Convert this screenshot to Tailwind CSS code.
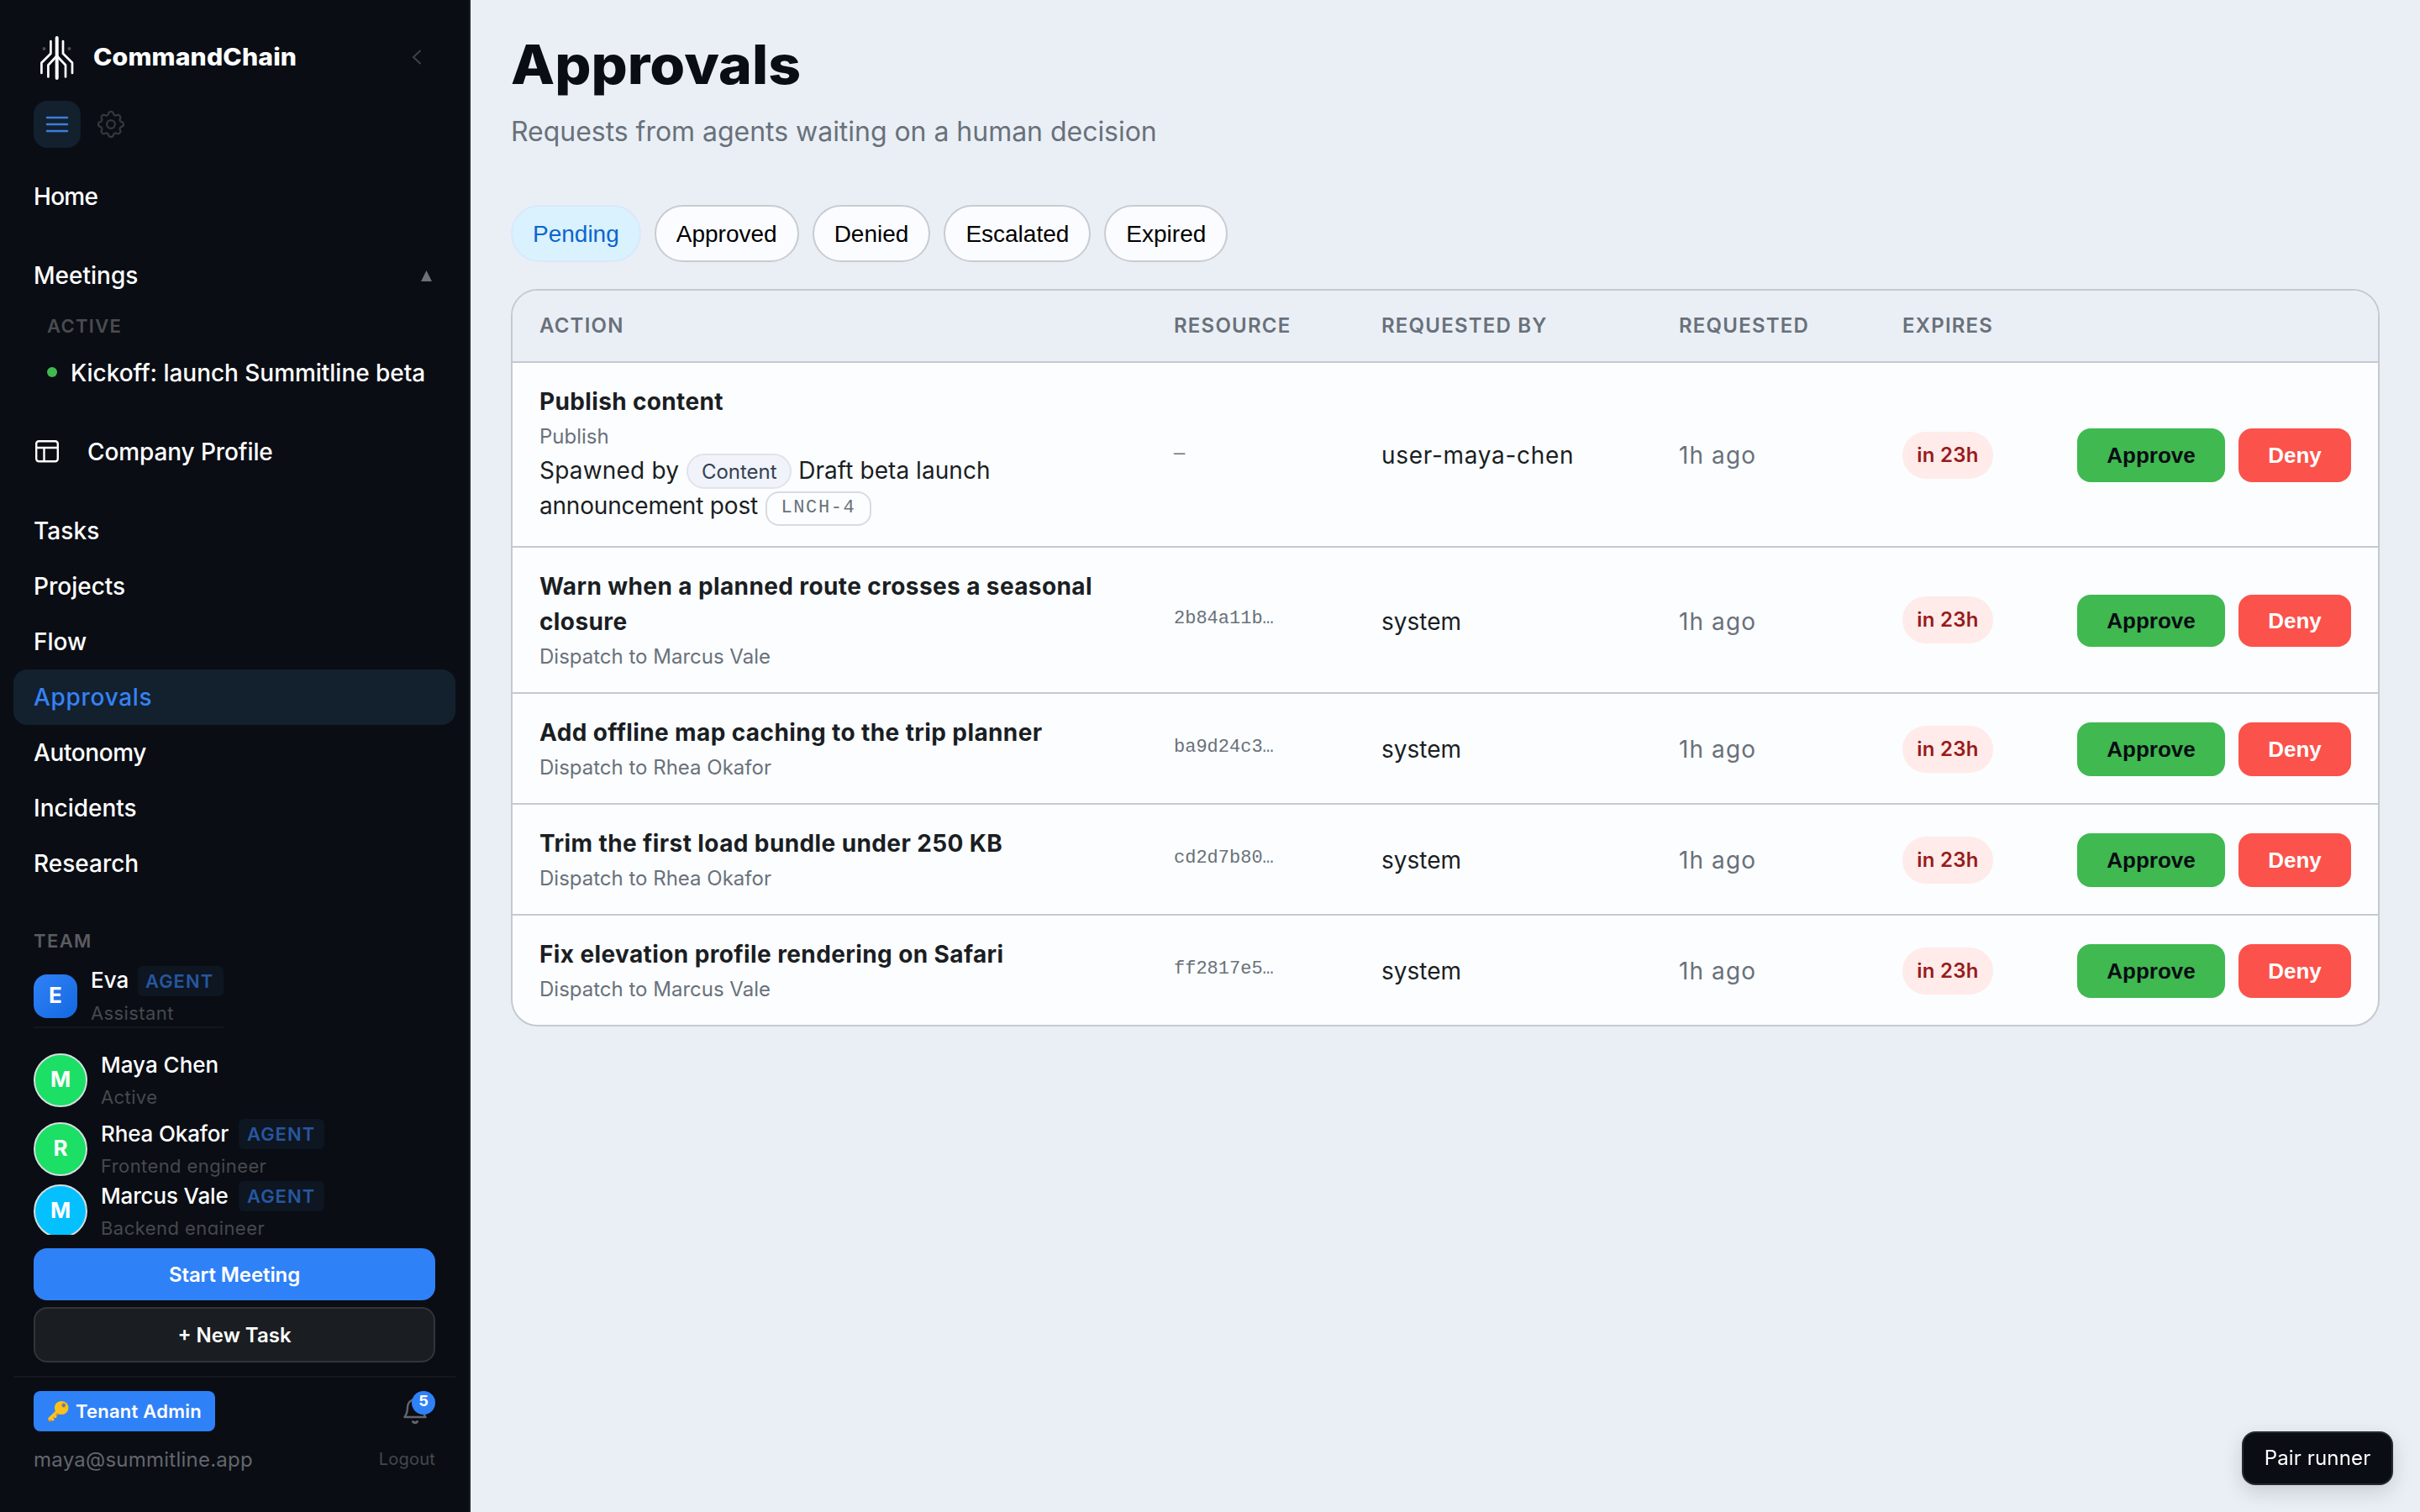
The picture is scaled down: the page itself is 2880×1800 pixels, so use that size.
<!DOCTYPE html>
<html lang="en">
<head>
<meta charset="utf-8">
<title>Approvals</title>
<script src="https://cdn.jsdelivr.net/npm/@tailwindcss/browser@4"></script>
</head>
<body class="flex h-[1800px] w-[2880px] overflow-hidden bg-[#eaeff6] font-['Inter',sans-serif] text-[28px] leading-[42px] text-[#1a1e23]">

<aside class="flex h-full w-[560px] shrink-0 flex-col border-r-2 border-[#1c2026] bg-[#0a0d14] text-white">
  <div class="flex min-h-0 flex-col overflow-hidden h-[1470px]">
    <!-- brand -->
    <div class="mt-[36px] flex h-[64px] shrink-0 items-center pl-[40px] pr-[54px]">
      <svg class="h-[56px] w-[56px]" viewBox="0 0 56 56" fill="none" stroke="#fff" stroke-linecap="round" stroke-linejoin="round" stroke-width="2.7">
        <path d="M27.7 5v48" stroke-width="4"/>
        <path d="M20.4 9v14.7L9.4 34.700V47M35 9v14.700l11 11V47"/>
        <path d="M27.700 26.500 17.400 37.500V51.500M27.700 26.500 38 37.500V51.500"/>
        <circle cx="12.500" cy="18" r="2" fill="#4a4c50" stroke="none"/><circle cx="42.500" cy="18" r="2" fill="#4a4c50" stroke="none"/>
      </svg>
      <span class="ml-[15px] origin-left scale-x-[1.08] text-[28px] font-extrabold tracking-[0.1px]">CommandChain</span>
      <svg class="ml-auto h-[20px] w-[16px]" viewBox="0 0 16 20" fill="none" stroke="#3f4247" stroke-width="2"><path d="M12.500 2 4 10l8.500 8"/></svg>
    </div>
    <div class="mt-[20px] flex h-[56px] shrink-0 gap-2 pl-[40px]">
      <div class="flex size-[56px] items-center justify-center rounded-2xl bg-[#13202e]">
        <svg class="size-[32px]" viewBox="0 0 32 32" stroke="#3a7edb" stroke-width="2.600" stroke-linecap="round"><path d="M4 8h24M4 16h24M4 24h24"/></svg>
      </div>
      <div class="flex size-[56px] items-center justify-center">
        <svg class="size-[36px]" viewBox="0 0 32 32" fill="none" stroke="#35383d" stroke-width="2" stroke-linejoin="round"><circle cx="16" cy="16" r="4.300"/><path d="M13.400 4.600a2.700 2.700 0 0 1 5.200 0c.3 1.900 2.200 2.700 3.800 1.600a2.700 2.700 0 0 1 3.500 3.600c-1.100 1.600-.3 3.500 1.500 3.700a2.600 2.600 0 0 1 0 5c-1.800.3-2.600 2.200-1.500 3.700a2.700 2.700 0 0 1-3.500 3.600c-1.600-1.100-3.500-.3-3.800 1.600a2.700 2.700 0 0 1-5.200 0c-.3-1.900-2.200-2.700-3.800-1.600a2.700 2.700 0 0 1-3.500-3.600c1.100-1.500.3-3.400-1.500-3.700a2.600 2.600 0 0 1 0-5c1.800-.2 2.600-2.100 1.500-3.700a2.700 2.700 0 0 1 3.500-3.600c1.600 1.100 3.500.3 3.800-1.600z"/></svg>
      </div>
    </div>

    <!-- navigation -->
    <nav class="mt-[25px] flex shrink-0 flex-col px-[16px] font-medium">
      <a class="flex h-[66px] items-center px-[24px] tracking-[-0.7px]">Home</a>
      <a class="mt-[28px] flex h-[66px] items-center justify-between pl-[24px] pr-[28px]"><span>Meetings</span>
        <svg class="size-[13px]" viewBox="0 0 13 13" fill="#6d7076"><path d="M6.500 0 13 13H0z"/></svg></a>
      <div class="flex h-[54px] items-center pl-[40px] text-[22px] font-semibold tracking-[1.3px] text-[#4a4c50]">ACTIVE</div>
      <a class="flex h-[58px] items-center pl-[40px]"><span class="mb-[3px] mr-[16px] size-[12px] rounded-full bg-[#3fb950]"></span><span class="tracking-[-0.04px]">Kickoff: launch Summitline beta</span></a>
      <a class="mt-[32px] flex h-[66px] items-center px-[24px]">
        <svg class="mb-[3px] size-[32px]" viewBox="0 0 32 32" fill="none" stroke="#fff" stroke-width="2.400" stroke-linejoin="round"><rect x="3.200" y="4.200" width="25.600" height="24" rx="3"/><path d="M3.200 12h25.600M12.500 12v16"/></svg>
        <span class="ml-[32px] tracking-[-0.1px]">Company Profile</span></a>
      <a class="mt-[28px] flex h-[66px] items-center px-[24px] tracking-[0.1px]">Tasks</a>
      <a class="flex h-[66px] items-center px-[24px]">Projects</a>
      <a class="flex h-[66px] items-center px-[24px]">Flow</a>
      <a class="flex h-[66px] items-center rounded-2xl bg-[#13202e] px-[24px] tracking-[0.7px] text-[#3582f4]">Approvals</a>
      <a class="flex h-[66px] items-center px-[24px] tracking-[-0.4px]">Autonomy</a>
      <a class="flex h-[66px] items-center px-[24px]">Incidents</a>
      <a class="flex h-[66px] items-center px-[24px]">Research</a>
    </nav>

    <!-- team -->
    <div class="mt-[41px] flex h-[36px] shrink-0 items-center pl-[40px] text-[22px] font-semibold tracking-[1.4px] text-[#5a5c60]">TEAM</div>
    <div class="ml-[40px] mt-[10px] flex h-[76px] w-[226px] shrink-0 items-start border-b-2 border-[#13161b]">
      <div class="mt-[12px] flex size-[52px] shrink-0 items-center justify-center rounded-2xl bg-linear-to-br from-[#2f81f7] to-[#1269e0] pb-[2px] text-[26px] font-bold">E</div>
      <div class="ml-[16px]">
        <div class="mt-[2px] flex h-[36px] items-center text-[26px] font-medium"><span class="w-[56px] pb-[2px]">Eva</span><span class="flex h-[36px] w-[102px] items-center rounded-[6px] bg-[#0d1621] pl-[9px] text-[22px] font-semibold tracking-[1px] text-[#27569f]">AGENT</span></div>
        <div class="h-[36px] pt-[2px] text-[22px] leading-[36px] tracking-[0.4px] text-[#46494d]">Assistant</div>
      </div>
    </div>
    <div class="ml-[40px] mt-[24px] flex h-[74px] shrink-0 items-start">
      <div class="mt-[6px] flex size-[64px] shrink-0 items-center justify-center rounded-full border-2 border-[#d5dfe0] bg-[#1cdf66] pb-[2px] text-[26px] font-bold">M</div>
      <div class="ml-[16px] mt-[2px]">
        <div class="flex h-[36px] items-center text-[26px] font-medium">Maya Chen</div>
        <div class="h-[36px] pt-[2px] text-[22px] leading-[36px] tracking-[0.4px] text-[#46494d]">Active</div>
      </div>
    </div>
    <div class="ml-[40px] mt-[8px] flex h-[74px] shrink-0 items-start">
      <div class="mt-[6px] flex size-[64px] shrink-0 items-center justify-center rounded-full border-2 border-[#d5dfe0] bg-[#1cdf66] pb-[2px] text-[26px] font-bold">R</div>
      <div class="ml-[16px] mt-[2px]">
        <div class="flex h-[36px] items-center text-[26px] font-medium"><span class="w-[164px] pb-[1px] tracking-[-0.15px]">Rhea Okafor</span><span class="flex h-[36px] w-[102px] items-center rounded-[6px] bg-[#0d1621] pl-[10px] text-[22px] font-semibold tracking-[1px] text-[#27569f]">AGENT</span></div>
        <div class="h-[36px] pt-[2px] text-[22px] leading-[36px] tracking-[0.4px] text-[#46494d]">Frontend engineer</div>
      </div>
    </div>
    <div class="ml-[40px] flex h-[74px] shrink-0 items-start">
      <div class="mt-[6px] flex size-[64px] shrink-0 items-center justify-center rounded-full border-2 border-[#d5dfe0] bg-[#05c0ff] pb-[2px] text-[26px] font-bold">M</div>
      <div class="ml-[16px] mt-[2px]">
        <div class="flex h-[36px] items-center text-[26px] font-medium"><span class="w-[164px] pb-[1px] tracking-[-0.15px]">Marcus Vale</span><span class="flex h-[36px] w-[102px] items-center rounded-[6px] bg-[#0d1621] pl-[10px] text-[22px] font-semibold tracking-[1px] text-[#27569f]">AGENT</span></div>
        <div class="h-[36px] pt-[2px] text-[22px] leading-[36px] tracking-[0.45px] text-[#46494d]">Backend engineer</div>
      </div>
    </div>
  </div>

  <!-- actions -->
  <div class="mt-[16px] flex shrink-0 flex-col gap-2 px-[40px] text-[24px] font-semibold">
    <button class="h-[62px] rounded-2xl bg-[#2f81f7] pt-[2px] tracking-[-0.1px]">Start Meeting</button>
    <button class="h-[66px] rounded-2xl border-2 border-[#313539] bg-[#1a1e22] pt-[2px]">+ New Task</button>
  </div>
  <div class="mx-[16px] mt-[16px] h-[2px] bg-[#14181d]"></div>
  <div class="mt-[16px] flex h-[48px] items-center justify-between px-[40px]">
    <span class="flex h-[48px] w-[216px] items-center justify-center gap-[8px] rounded-lg bg-[#2f81f7] text-[22px] font-semibold tracking-[0.25px]">
      <svg class="size-[26px]" viewBox="0 0 26 26"><path d="M13 14 3.500 23" stroke="#e59600" stroke-width="4.500" stroke-linecap="round"/><path d="M12 13 2.800 21.800M4.500 20l2.500 3M8 17l2 2.500" stroke="#fbc02d" stroke-width="3" stroke-linecap="round"/><ellipse cx="17.200" cy="9" rx="8.300" ry="8" fill="#fcc21b"/><circle cx="19.800" cy="6" r="2.300" fill="#2f81f7" stroke="#e59600"/></svg>
      <span>Tenant Admin</span></span>
    <div class="relative h-[48px] w-[40px]">
      <svg class="absolute -left-[1px] top-[6px] size-[34px]" viewBox="0 0 34 34" fill="none" stroke="#62656a" stroke-width="2.400" stroke-linecap="round" stroke-linejoin="round"><path d="M4.500 25C7.500 21 8 18 8 13a9 9 0 0 1 18 0c0 5 .5 8 3.500 12z"/><path d="M14.500 30.500a3.200 3.200 0 0 0 5 0" stroke-width="3"/></svg>
      <span class="absolute right-0 top-0 flex size-[28px] items-center justify-center rounded-full bg-[#2f81f7] pb-[4px] text-[18px] font-bold">5</span>
    </div>
  </div>
  <div class="mt-[13px] flex h-[42px] items-center justify-between px-[40px] text-[24px] tracking-[0.24px] text-[#63666c]"><span>maya@summitline.app</span><span class="pb-[2px] text-[20px] tracking-[0.2px] text-[#45484d]">Logout</span></div>
</aside>

<main class="flex grow flex-col pl-[48px] pr-[48px]">
  <h1 class="mt-[36px] h-[84px] w-[340px] origin-left scale-x-[1.06] text-[64px] font-extrabold leading-[82px] text-[#0a0d14]">Approvals</h1>
  <p class="mt-[12px] h-[48px] pt-[1px] text-[32px] leading-[48px] tracking-[-0.03px] text-[#69717a]">Requests from agents waiting on a human decision</p>
  <div class="mt-[64px] flex h-[68px] gap-4 font-['Liberation_Sans',Arial,sans-serif] text-black">
    <button class="h-[68px] rounded-full border-2 border-[#d9e8fb] bg-[#daf1fe] px-[24px] pt-[1px] text-[#0b66d0]">Pending</button>
    <button class="h-[68px] rounded-full border-2 border-[#c8ccd2] bg-[#fbfcff] px-[24px] pt-[1px]">Approved</button>
    <button class="h-[68px] rounded-full border-2 border-[#c8ccd2] bg-[#fbfcff] px-[24px] pt-[1px]">Denied</button>
    <button class="h-[68px] rounded-full border-2 border-[#c8ccd2] bg-[#fbfcff] px-[24px] pt-[1px]">Escalated</button>
    <button class="h-[68px] rounded-full border-2 border-[#c8ccd2] bg-[#fbfcff] px-[24px] pt-[1px]">Expired</button>
  </div>

  <section class="mt-[32px] flex h-[878px] w-[2224px] flex-col divide-y-2 divide-[#c5c9d0] overflow-hidden rounded-[32px] border-2 border-[#c5c9d0] bg-[#fbfdff]">
    <div class="grid h-[86px] shrink-0 grid-cols-[755px_247px_354px_266px_1fr] items-center bg-[#eaeff6] pl-[32px] text-[24px] font-semibold tracking-[1.2px] text-[#69717a]">
      <span>ACTION</span><span>RESOURCE</span><span>REQUESTED BY</span><span>REQUESTED</span><span>EXPIRES</span>
    </div>

    <div class="grid h-[220px] shrink-0 grid-cols-[755px_247px_354px_266px_208px_1fr] items-center pl-[32px]">
      <div class="h-full pt-[25px]">
        <div class="h-[42px] font-bold tracking-[0.35px]">Publish content</div>
        <div class="mt-[2px] h-[38px] text-[24px] leading-[38px] text-[#69717a]">Publish</div>
        <div class="flex h-[44px] items-start"><span class="tracking-[0.2px]">Spawned by</span><span class="ml-[9px] mt-[1px] flex h-[42px] w-[125px] items-center justify-center rounded-full border-2 border-[#e0e4ea] bg-[#f0f3f9] pt-[2px] text-[24px] text-[#344054]">Content</span><span class="ml-[8px] tracking-[0.05px]">Draft beta launch</span></div>
        <div class="flex h-[44px] items-start"><span class="-mt-[2px] tracking-[-0.2px]">announcement post</span><span class="ml-[9px] mt-[2px] flex h-[41px] w-[126px] items-center justify-center rounded-2xl border-2 border-[#d8dbe0] pb-[2px] font-['Liberation_Mono',monospace] text-[22px] tracking-[1.6px] text-[#69717a]">LNCH-4</span></div>
      </div>
      <span class="font-['Liberation_Mono',monospace] text-[22px] text-[#69717a]">—</span>
      <span class="pt-[2px] tracking-[0.7px]">user-maya-chen</span>
      <span class="pt-[2px] tracking-[1.1px] text-[#69717a]">1h ago</span>
      <span class="mt-[2px] flex h-[56px] w-[108px] items-center justify-center rounded-full bg-[#ffebe9] text-[24px] font-semibold tracking-[0.3px] text-[#981b1c]">in 23h</span>
      <div class="mt-[2px] flex gap-4 font-['Liberation_Sans',Arial,sans-serif] text-[26px] font-bold"><button class="h-[64px] w-[176px] rounded-2xl bg-[#3fb950] text-[#0a0d14]">Approve</button><button class="h-[64px] w-[134px] rounded-2xl bg-[#fb524b] text-white">Deny</button></div>
    </div>

    <div class="grid h-[174px] shrink-0 grid-cols-[755px_247px_354px_266px_208px_1fr] items-center pl-[32px]">
      <div class="h-full pt-[25px]">
        <div class="w-[690px] font-bold tracking-[0.39px]">Warn when a planned route crosses a seasonal closure</div>
        <div class="mt-[2px] h-[38px] text-[24px] leading-[38px] text-[#69717a]">Dispatch to Marcus Vale</div>
      </div>
      <span class="pb-[2px] font-['Liberation_Mono',monospace] text-[22px] text-[#69717a]">2b84a11b…</span>
      <span class="pt-[4px]">system</span>
      <span class="pt-[4px] tracking-[1.1px] text-[#69717a]">1h ago</span>
      <span class="flex h-[56px] w-[108px] items-center justify-center rounded-full bg-[#ffebe9] text-[24px] font-semibold tracking-[0.3px] text-[#981b1c]">in 23h</span>
      <div class="flex gap-4 pt-[2px] font-['Liberation_Sans',Arial,sans-serif] text-[26px] font-bold"><button class="h-[62px] w-[176px] rounded-2xl bg-[#3fb950] text-[#0a0d14]">Approve</button><button class="h-[62px] w-[134px] rounded-2xl bg-[#fb524b] text-white">Deny</button></div>
    </div>

    <div class="grid h-[132px] shrink-0 grid-cols-[755px_247px_354px_266px_208px_1fr] items-center pl-[32px]">
      <div class="h-full pt-[25px]">
        <div class="font-bold tracking-[0.39px]">Add offline map caching to the trip planner</div>
        <div class="mt-[2px] h-[38px] text-[24px] leading-[38px] text-[#69717a]">Dispatch to Rhea Okafor</div>
      </div>
      <span class="pb-[2px] font-['Liberation_Mono',monospace] text-[22px] text-[#69717a]">ba9d24c3…</span>
      <span class="pt-[2px]">system</span>
      <span class="pt-[2px] tracking-[1.1px] text-[#69717a]">1h ago</span>
      <span class="mt-[2px] flex h-[56px] w-[108px] items-center justify-center rounded-full bg-[#ffebe9] text-[24px] font-semibold tracking-[0.3px] text-[#981b1c]">in 23h</span>
      <div class="mt-[2px] flex gap-4 font-['Liberation_Sans',Arial,sans-serif] text-[26px] font-bold"><button class="h-[64px] w-[176px] rounded-2xl bg-[#3fb950] text-[#0a0d14]">Approve</button><button class="h-[64px] w-[134px] rounded-2xl bg-[#fb524b] text-white">Deny</button></div>
    </div>

    <div class="grid h-[132px] shrink-0 grid-cols-[755px_247px_354px_266px_208px_1fr] items-center pl-[32px]">
      <div class="h-full pt-[25px]">
        <div class="font-bold tracking-[0.39px]">Trim the first load bundle under 250 KB</div>
        <div class="mt-[2px] h-[38px] text-[24px] leading-[38px] text-[#69717a]">Dispatch to Rhea Okafor</div>
      </div>
      <span class="pb-[2px] font-['Liberation_Mono',monospace] text-[22px] text-[#69717a]">cd2d7b80…</span>
      <span class="pt-[2px]">system</span>
      <span class="pt-[2px] tracking-[1.1px] text-[#69717a]">1h ago</span>
      <span class="mt-[2px] flex h-[56px] w-[108px] items-center justify-center rounded-full bg-[#ffebe9] text-[24px] font-semibold tracking-[0.3px] text-[#981b1c]">in 23h</span>
      <div class="mt-[2px] flex gap-4 font-['Liberation_Sans',Arial,sans-serif] text-[26px] font-bold"><button class="h-[64px] w-[176px] rounded-2xl bg-[#3fb950] text-[#0a0d14]">Approve</button><button class="h-[64px] w-[134px] rounded-2xl bg-[#fb524b] text-white">Deny</button></div>
    </div>

    <div class="grid h-[130px] shrink-0 grid-cols-[755px_247px_354px_266px_208px_1fr] items-center pl-[32px]">
      <div class="h-full pt-[25px]">
        <div class="font-bold tracking-[0.39px]">Fix elevation profile rendering on Safari</div>
        <div class="mt-[2px] h-[38px] text-[24px] leading-[38px] text-[#69717a]">Dispatch to Marcus Vale</div>
      </div>
      <span class="pb-[2px] font-['Liberation_Mono',monospace] text-[22px] text-[#69717a]">ff2817e5…</span>
      <span class="pt-[2px]">system</span>
      <span class="pt-[2px] tracking-[1.1px] text-[#69717a]">1h ago</span>
      <span class="mt-[2px] flex h-[56px] w-[108px] items-center justify-center rounded-full bg-[#ffebe9] text-[24px] font-semibold tracking-[0.3px] text-[#981b1c]">in 23h</span>
      <div class="mt-[2px] flex gap-4 font-['Liberation_Sans',Arial,sans-serif] text-[26px] font-bold"><button class="h-[64px] w-[176px] rounded-2xl bg-[#3fb950] text-[#0a0d14]">Approve</button><button class="h-[64px] w-[134px] rounded-2xl bg-[#fb524b] text-white">Deny</button></div>
    </div>
  </section>
</main>

<button class="fixed bottom-[32px] right-[32px] h-[64px] w-[180px] rounded-2xl border-2 border-[#252a31] bg-[#0a0d14] text-[24px] tracking-[0.15px] text-white shadow-[0_8px_24px_rgba(0,0,0,0.15)]">Pair runner</button>
</body>
</html>
